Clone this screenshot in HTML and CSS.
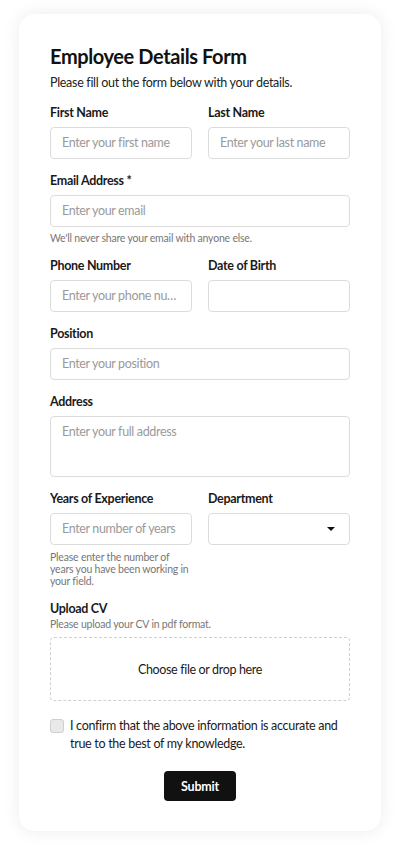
FILE: index.html
```html
<!DOCTYPE html>
<html lang="en">
<head>
<meta charset="utf-8">
<title>Employee Details Form</title>
<link rel="stylesheet" href="styles.css">
</head>
<body>
<div class="page">
  <form class="card">
    <h1 class="title">Employee Details Form</h1>
    <p class="subtitle">Please fill out the form below with your details.</p>

    <div class="row">
      <div class="field">
        <label class="label">First Name</label>
        <div class="input placeholder">Enter your first name</div>
      </div>
      <div class="field">
        <label class="label">Last Name</label>
        <div class="input placeholder">Enter your last name</div>
      </div>
    </div>

    <div class="field">
      <label class="label">Email Address *</label>
      <div class="input placeholder">Enter your email</div>
      <p class="help">We'll never share your email with anyone else.</p>
    </div>

    <div class="row">
      <div class="field">
        <label class="label">Phone Number</label>
        <div class="input placeholder">Enter your phone nu…</div>
      </div>
      <div class="field">
        <label class="label">Date of Birth</label>
        <div class="input"></div>
      </div>
    </div>

    <div class="field">
      <label class="label">Position</label>
      <div class="input placeholder">Enter your position</div>
    </div>

    <div class="field">
      <label class="label">Address</label>
      <div class="input textarea placeholder">Enter your full address</div>
    </div>

    <div class="row">
      <div class="field">
        <label class="label">Years of Experience</label>
        <div class="input placeholder">Enter number of years</div>
        <p class="help help-years">Please enter the number of years you have been working in your field.</p>
      </div>
      <div class="field">
        <label class="label">Department</label>
        <div class="input select"><span class="caret"></span></div>
      </div>
    </div>

    <div class="field">
      <label class="label">Upload CV</label>
      <p class="help upload-help">Please upload your CV in pdf format.</p>
      <div class="dropzone">Choose file or drop here</div>
    </div>

    <div class="confirm">
      <span class="checkbox"></span>
      <span class="confirm-text">I confirm that the above information is accurate and true to the best of my knowledge.</span>
    </div>

    <div class="actions">
      <button type="button" class="submit">Submit</button>
    </div>
  </form>
</div>
</body>
</html>
```

FILE: styles.css
```css
* { box-sizing: border-box; }
html, body { margin: 0; padding: 0; background: #ffffff; }
body {
  font-family: Lato, "Noto Sans", sans-serif;
  color: #1a1a1a;
}
.page {
  padding: 14px 19px 16px;
}
.card {
  width: 362px;
  background: #fff;
  border-radius: 16px;
  box-shadow: 0 0 18px rgba(0, 0, 0, 0.08);
  padding: 30px 31px 30px;
  display: flex;
  flex-direction: column;
  gap: 13px;
}
.title {
  margin: 0;
  font-size: 20px;
  line-height: 24px;
  font-weight: 700;
  letter-spacing: -0.4px;
  color: #111;
}
.subtitle {
  margin: -7px 0 -1px;
  font-size: 12.5px;
  letter-spacing: -0.3px;
  line-height: 18px;
  color: #222;
}
.row {
  display: grid;
  grid-template-columns: minmax(0, 1fr) minmax(0, 1fr);
  gap: 16px;
  align-items: start;
}
.field {
  display: flex;
  flex-direction: column;
  min-width: 0;
}
.label {
  display: block;
  font-size: 12.5px;
  letter-spacing: -0.3px;
  line-height: 18px;
  font-weight: 700;
  color: #1a1a1a;
  margin-bottom: 5px;
}
.input {
  height: 32px;
  border: 1px solid #dcdcdc;
  border-radius: 4px;
  padding: 0 11px;
  font-size: 12.5px;
  letter-spacing: -0.35px;
  line-height: 30px;
  white-space: nowrap;
  overflow: hidden;
  background: #fff;
}
.placeholder { color: #9a9a9a; }
.textarea {
  height: 61px;
  line-height: 18px;
  padding-top: 6px;
}
.select {
  display: flex;
  align-items: center;
  justify-content: flex-end;
  padding-right: 14px;
}
.caret {
  width: 0;
  height: 0;
  border-left: 4px solid transparent;
  border-right: 4px solid transparent;
  border-top: 4px solid #111;
}
.help {
  margin: 5px 0 0;
  font-size: 10.5px;
  letter-spacing: -0.2px;
  line-height: 12px;
  color: #777;
}
.help-years {
  margin-top: 6px;
}
.upload-help {
  margin: -5px 0 7px;
}
.dropzone {
  height: 64px;
  border: 1px dashed #d0d0d0;
  border-radius: 4px;
  display: flex;
  align-items: center;
  justify-content: center;
  font-size: 12.5px;
  letter-spacing: -0.35px;
  color: #1a1a1a;
}
.confirm {
  display: flex;
  align-items: flex-start;
  gap: 6px;
  margin-top: 3px;
}
.checkbox {
  flex: none;
  width: 14px;
  height: 14px;
  margin-top: 2px;
  border: 1px solid #cfcfcf;
  border-radius: 3px;
  background: #e9e9e9;
}
.confirm-text {
  font-size: 12.5px;
  letter-spacing: -0.3px;
  line-height: 18px;
  color: #1a1a1a;
}
.actions {
  display: flex;
  justify-content: center;
  margin-top: 5px;
}
.submit {
  width: 72px;
  height: 30px;
  border: none;
  border-radius: 4px;
  background: #111;
  color: #fff;
  font-family: inherit;
  font-size: 12.5px;
  letter-spacing: -0.2px;
  font-weight: 700;
  cursor: pointer;
}
```
